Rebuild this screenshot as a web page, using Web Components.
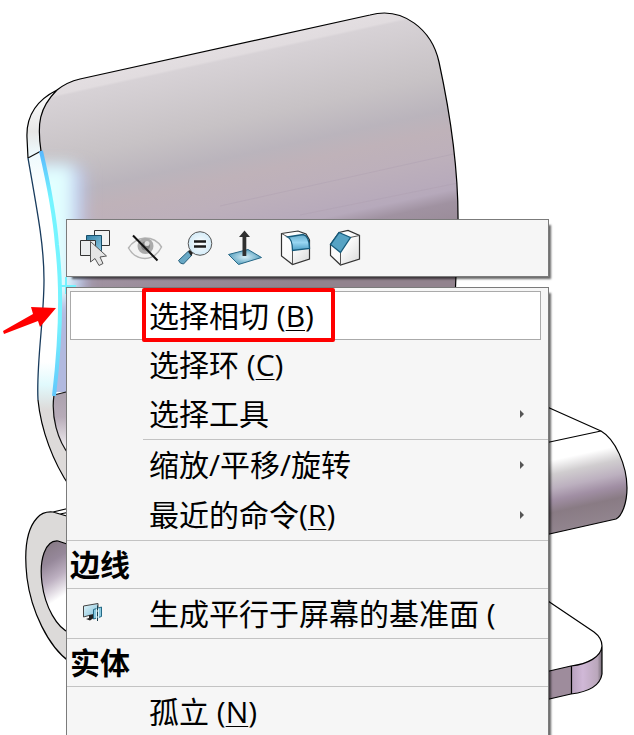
<!DOCTYPE html>
<html lang="zh-CN">
<head>
<meta charset="utf-8">
<meta name="viewport" content="width=device-width, initial-scale=1">
<title>选择相切</title>
<style>
  html, body {
    height: 100%;
    margin: 0;
    overflow: hidden;
    background: #fff;
  }
</style>
</head>
<body>
<cad-workspace>
  <part-view slot="scene"></part-view>
  <icon-toolbar>
    <tool-button icon="select" label="选择其他"></tool-button>
    <tool-button icon="hide" label="隐藏"></tool-button>
    <tool-button icon="zoom" label="放大所选范围"></tool-button>
    <tool-button icon="normal" label="正视于"></tool-button>
    <tool-button icon="fillet" label="圆角"></tool-button>
    <tool-button icon="chamfer" label="倒角"></tool-button>
  </icon-toolbar>
  <context-menu>
    <menu-row active marked>选择相切 (<u>B</u>)</menu-row>
    <menu-row>选择环 (<u>C</u>)</menu-row>
    <menu-row submenu>选择工具</menu-row>
    <menu-line indent></menu-line>
    <menu-row submenu>缩放/平移/旋转</menu-row>
    <menu-row submenu>最近的命令(<u>R</u>)</menu-row>
    <menu-line></menu-line>
    <menu-heading>边线</menu-heading>
    <menu-line></menu-line>
    <menu-row>
      <svg slot="icon" width="22" height="22" viewBox="0 0 22 22" aria-hidden="true">
        <defs>
          <linearGradient id="screen" x1="0" y1="0" x2="1" y2="1">
            <stop offset="0" stop-color="#e4f5fa"/><stop offset="1" stop-color="#7cc0da"/>
          </linearGradient>
        </defs>
        <path d="M1.500 3L16 0.500V10L1.500 14Z" fill="url(#screen)" stroke="#444"/>
        <path d="M7 12V15L4 16L8 17.500L11 15.500V12" fill="#222"/>
        <path d="M11.500 6.500L19.500 4V13.500L11.500 16Z" fill="#8bcbe1" stroke="#246985"/>
        <path d="M15.500 5.500V16" stroke="#d9f1f8" stroke-width="3"/>
        <path d="M15.500 2.500V18" stroke="#193d4b" stroke-dasharray="5 1"/>
      </svg>生成平行于屏幕的基准面 (</menu-row>
    <menu-line></menu-line>
    <menu-heading>实体</menu-heading>
    <menu-line></menu-line>
    <menu-row>孤立 (<u>N</u>)</menu-row>
  </context-menu>
</cad-workspace>

<script>
class CadWorkspace extends HTMLElement {
  constructor () {
    super()
    this.attachShadow({ mode: 'open' })
  }

  connectedCallback () {
    this.shadowRoot.innerHTML = /* html */`
      <style>
        :host {
          display: block;
          position: relative;
          min-height: 100vh;
          font: 30px/40px "Open Sans", "Noto Sans CJK SC", sans-serif;
          color: #000;
        }

        .panels {
          position: relative;
          display: flex;
          flex-direction: column;
          gap: 10px;
          padding: 219px 85px 0 66px;
        }
      </style>

      <slot name="scene"></slot>
      <div class="panels"><slot></slot></div>
    `
  }
}

class PartView extends HTMLElement {
  constructor () {
    super()
    this.attachShadow({ mode: 'open' })
  }

  connectedCallback () {
    this.shadowRoot.innerHTML = /* html */`
      <style>
        :host {
          display: block;
          position: absolute;
          inset: 0;
        }

        svg {
          display: block;
          width: 100%;
        }
      </style>

      <svg viewBox="0 0 634 735" fill="none" stroke-linejoin="round" aria-hidden="true">
        <defs>
          <linearGradient id="face" gradientUnits="userSpaceOnUse" x1="0" y1="97" x2="53" y2="338">
            <stop offset="0" stop-color="#e3dee1"/>
            <stop offset=".04" stop-color="#e1dcdf"/>
            <stop offset=".05" stop-color="#d7d2d6"/>
            <stop offset=".3" stop-color="#c7c2c5"/>
            <stop offset=".44" stop-color="#bab4bc"/>
            <stop offset=".52" stop-color="#bfb2b9"/>
            <stop offset=".62" stop-color="#bdb0bb"/>
            <stop offset=".76" stop-color="#b6a9bb"/>
            <stop offset=".81" stop-color="#a092a1"/>
            <stop offset="1" stop-color="#92838e"/>
          </linearGradient>
          <linearGradient id="side" gradientUnits="userSpaceOnUse" x1="0" y1="90" x2="0" y2="410">
            <stop offset="0" stop-color="#fff"/>
            <stop offset=".13" stop-color="#e7e7e6"/>
            <stop offset=".2" stop-color="#eefafd"/>
            <stop offset=".32" stop-color="#fff"/>
            <stop offset=".85" stop-color="#fff"/>
            <stop offset=".92" stop-color="#e1fafd"/>
            <stop offset="1" stop-color="#dddad9"/>
          </linearGradient>
          <linearGradient id="edge" gradientUnits="userSpaceOnUse" x1="0" y1="150" x2="0" y2="396">
            <stop offset="0" stop-color="#59b7fd"/>
            <stop offset=".2" stop-color="#74f5ff"/>
            <stop offset=".7" stop-color="#75f3ff"/>
            <stop offset="1" stop-color="#61c8fc"/>
          </linearGradient>
          <linearGradient id="bore" x1="0" y1="0" x2=".2" y2="1">
            <stop offset="0" stop-color="#82767e"/>
            <stop offset=".28" stop-color="#96889a"/>
            <stop offset=".48" stop-color="#bdb0c1"/>
            <stop offset=".72" stop-color="#fff"/>
          </linearGradient>
          <linearGradient id="slot" x1="0" y1="0" x2="0" y2="1">
            <stop offset="0" stop-color="#aaa0ad"/>
            <stop offset=".4" stop-color="#b7abb8"/>
            <stop offset="1" stop-color="#fff"/>
          </linearGradient>
          <linearGradient id="pin" gradientUnits="userSpaceOnUse" x1="580" y1="435" x2="600" y2="526">
            <stop offset=".2" stop-color="#fff"/>
            <stop offset=".35" stop-color="#d0cdcf"/>
            <stop offset=".5" stop-color="#bcb0bf"/>
            <stop offset=".62" stop-color="#a18fa4"/>
            <stop offset=".75" stop-color="#897b84"/>
            <stop offset="1" stop-color="#938690"/>
          </linearGradient>
          <linearGradient id="rim" x1="0" y1="0" x2="1" y2="0">
            <stop offset="0" stop-color="#b6a0bc"/>
            <stop offset=".38" stop-color="#d0b8d7"/>
            <stop offset=".85" stop-color="#baa7bb"/>
            <stop offset="1" stop-color="#756c76"/>
          </linearGradient>
          <clipPath id="faceClip">
            <path d="M41 151C37 124 39 108 57 90Q67 82 80 79L370 15C403 6 432 30 439 62Q459 154 458 225L455 300V392H54C62 350 62 250 54 215Z"/>
          </clipPath>
          <filter id="soft" x="-100%" y="-30%" width="300%" height="160%">
            <feGaussianBlur stdDeviation="8"/>
          </filter>
        </defs>

        <!-- upper plate -->
        <path d="M57 90C35 101 26 118 27 138L28 158C39 220 44 248 44 280C44 320 36 365 38 400C41 430 53 462 70 487V452C58 438 51 416 54 395C62 350 62 250 54 215L41 151C37 124 39 108 57 90Z" fill="url(#side)"/>
        <g clip-path="url(#faceClip)">
          <path d="M20 0H470V400H20Z" fill="url(#face)"/>
          <path d="M220 206L458 153M300 215L458 183" stroke="#ac9eaf" stroke-opacity=".4"/>
          <path d="M30 168H84V410H30Z" fill="#bccbfa" fill-opacity=".75" filter="url(#soft)"/>
          <path d="M30 165H73V300H30Z" fill="#e2ffff" filter="url(#soft)"/>
        </g>
        <path d="M54 395L70 391V456C57 440 51 416 54 395Z" fill="url(#slot)"/>
        <path d="M54 395L70 391M54 395C51 416 57 440 70 456M28 158L41 151" stroke="#111" stroke-width="1.200"/>
        <path d="M28 158C39 220 44 248 44 280C44 320 36 365 38 400" stroke="#183b5d" stroke-width="1.300"/>
        <path d="M38 400C41 430 53 462 70 487M28 158L27 138C26 118 35 101 57 90M41 151C37 124 39 108 57 90Q67 82 80 79L370 15C403 6 432 30 439 62Q459 154 458 225L455 300" stroke="#000" stroke-width="1.200"/>
        <path d="M41 151Q54 207 57 245C63 295 60 345 54 396" stroke="url(#edge)" stroke-width="4"/>
        <path d="M60 286H76M66 277V294" stroke="#74f2ff" stroke-width="2"/>

        <!-- lower ring -->
        <path d="M70 517L53 512Q43 511 37 518C26 530 24 552 27 578C31 610 48 647 70 662V633C57 628 45 607 42 583C39 560 45 540 58 541L70 545Z" fill="#dcdad9"/>
        <path d="M70 545L58 541C45 540 39 560 42 583C45 607 57 628 70 633Z" fill="url(#bore)"/>
        <path d="M70 517L53 512Q43 511 37 518C26 530 24 552 27 578C31 610 48 647 70 662M70 545L58 541C45 540 39 560 42 583C45 607 57 628 70 633M53 512L70 508M60 514L70 512" stroke="#000" stroke-width="1.200"/>

        <!-- pin and foot on the right -->
        <path d="M545 443L601 431C615 439 627 465 627 488C627 503 622 516 616 519L545 535Z" fill="url(#pin)"/>
        <path d="M545 406L601 431L545 443M601 431C615 439 627 465 627 488C627 503 622 516 616 519L545 535" stroke="#000" stroke-width="1.200"/>
        <path d="M571 666Q602 660 602 645V674Q600 689 571 694Z" fill="url(#rim)"/>
        <path d="M545 672L571 666V694L545 700Z" fill="#9e8c9c"/>
        <path d="M545 599L594 632Q602 638 602 646C601 657 588 664 571 666L545 672M602 646V674C600 687 587 692 571 694L545 700M571.500 666V694" stroke="#000" stroke-width="1.200"/>

        <path d="M3 331L33 314L31 307L56 308L40 327L38 321L4 334Z" fill="#f00"/>
      </svg>
    `
  }
}

class IconToolbar extends HTMLElement {
  constructor () {
    super()
    this.attachShadow({ mode: 'open' })
  }

  connectedCallback () {
    this.setAttribute('role', 'toolbar')
    this.shadowRoot.innerHTML = /* html */`
      <style>
        :host {
          display: flex;
          padding: 0 3px;
          background: #f6f6f6;
          border: 1px solid #7b7b7b;
          box-shadow: 4px 4px 2px -2px rgba(0, 0, 0, 0.6);
        }
      </style>

      <slot></slot>
    `
  }
}

const icons = {
  select: `
    <path d="M24.500 10.500H39.500V25.500H24.500Z" fill="#f1f2f2" stroke="#333"/>
    <path d="M16.500 15.500H31.500V30.500H16.500Z" fill="url(#blue)" stroke="#164e69"/>
    <path d="M10.500 20.500H25.500V35.500H10.500Z" fill="#ebedee" stroke="#333"/>
    <path d="M20.500 21.500V42L25 38.500L29 45.500L33 43.500L30 37L36.500 36Z" fill="#e5e5e5" stroke="#555"/>`,
  hide: `
    <path d="M8.500 28Q14 19 25 18Q36 18 41.500 27Q36 38 25 38.500Q14 38 8.500 28Z" fill="#f3f3f3" stroke="#b4b4b4" stroke-width="1.500"/>
    <circle cx="25.500" cy="26" r="8" fill="#aaa"/>
    <circle cx="25.500" cy="26" r="4.500" fill="#858585"/>
    <circle cx="27" cy="23.500" r="2.500" fill="#ddd"/>
    <path d="M13 15.500L37.500 40.500" stroke="#111" stroke-width="2"/>`,
  zoom: `
    <path d="M18 31.500L8.500 40.500Q10 44 13.500 44L22 35Z" fill="#68a8c5" stroke="#265e7a"/>
    <path d="M18 31L20 30L23 33L21 36Z" fill="#222"/>
    <circle cx="30" cy="23.500" r="11.800" fill="url(#glass)" stroke="#555"/>
    <path d="M24 21.500H36M24 26.500H36" stroke="#1c1c1c" stroke-width="2.700"/>`,
  normal: `
    <path d="M8.500 34.500L28 29.500L41.500 37.500L18.500 44.500Z" fill="url(#plane)" stroke="#276887"/>
    <path d="M22.500 36V17H19L24.500 10.500L30 17H26.300V36Z" fill="#303030"/>`,
  fillet: `
    <path d="M11.500 13.500L28 11L36 14L39.500 20V39L22.500 44.500L11.500 36Z" fill="url(#solid)" stroke="#333" stroke-width="1.200"/>
    <path d="M11.500 13.500L18 17M22.500 30V44.500" stroke="#555"/>
    <path d="M17.500 17L33 14.500Q39.500 16 39.500 28.500L22.500 30.500Q22.500 19 17.500 17Z" fill="url(#band)" stroke="#155a7b" stroke-width="1.300"/>`,
  chamfer: `
    <path d="M10.500 24.500L19 12.500L28 10.500L39.500 15.500V39L20.500 45L10.500 35.500Z" fill="url(#solid)" stroke="#333" stroke-width="1.200"/>
    <path d="M30 17.500L39.500 15.500M20.500 33V45" stroke="#555"/>
    <path d="M19 12.500L30.500 17.500L20.500 32.500L10.500 24.500Z" fill="#57a3c4" stroke="#155a7b" stroke-width="1.300"/>`
}

class ToolButton extends HTMLElement {
  constructor () {
    super()
    this.attachShadow({ mode: 'open' })
  }

  connectedCallback () {
    this.shadowRoot.innerHTML = /* html */`
      <style>
        :host {
          display: block;
        }

        button {
          display: block;
          padding: 0;
          border: none;
          background: none;
        }

        svg {
          display: block;
        }
      </style>

      <button type="button" aria-label="${this.getAttribute('label')}">
        <svg width="50" height="56" viewBox="0 0 50 56" fill="none" aria-hidden="true">
          <defs>
            <linearGradient id="blue" x1="0" y1="0" x2="1" y2="1">
              <stop stop-color="#2f7fa5"/><stop offset="1" stop-color="#8fc9e2"/>
            </linearGradient>
            <linearGradient id="band" x1="0" y1="0" x2="0" y2="1">
              <stop stop-color="#63a9c9"/><stop offset=".5" stop-color="#98d6f2"/><stop offset="1" stop-color="#4c9ec5"/>
            </linearGradient>
            <linearGradient id="solid" x1="0" y1="0" x2="1" y2="1">
              <stop stop-color="#fff"/><stop offset=".5" stop-color="#fafafa"/><stop offset="1" stop-color="#d8d8d8"/>
            </linearGradient>
            <radialGradient id="plane">
              <stop stop-color="#d7eef7"/><stop offset="1" stop-color="#5ba3c1"/>
            </radialGradient>
            <radialGradient id="glass">
              <stop stop-color="#fff"/><stop offset="1" stop-color="#d3ebf8"/>
            </radialGradient>
          </defs>
          ${icons[this.getAttribute('icon')]}
        </svg>
      </button>
    `
  }
}

class ContextMenu extends HTMLElement {
  constructor () {
    super()
    this.attachShadow({ mode: 'open' })
  }

  connectedCallback () {
    this.setAttribute('role', 'menu')
    this.shadowRoot.innerHTML = /* html */`
      <style>
        :host {
          display: flex;
          flex-direction: column;
          padding: 3px 0;
          background: #f6f6f6;
          border: 1px solid #7b7b7b;
          box-shadow: 4px 4px 2px -2px rgba(0, 0, 0, 0.6);
        }
      </style>

      <slot></slot>
    `
  }
}

class MenuRow extends HTMLElement {
  constructor () {
    super()
    this.attachShadow({ mode: 'open' })
  }

  connectedCallback () {
    this.shadowRoot.innerHTML = /* html */`
      <style>
        :host {
          display: block;
          padding: 0 7px 0 3px;
        }

        button {
          box-sizing: border-box;
          display: flex;
          align-items: center;
          width: 100%;
          height: 49px;
          padding: 0 16px 0 0;
          border: 1px solid transparent;
          background: none;
          color: inherit;
          font: inherit;
          text-align: left;
          white-space: nowrap;
        }

        :host([submenu]) button {
          height: 50px;
        }

        :host([active]) button {
          background: #fff;
          border-color: #aaa;
        }

        .icon {
          display: flex;
          flex: none;
          box-sizing: border-box;
          width: 78px;
          padding-left: 11px;
        }

        .label {
          position: relative;
          padding-right: 21px;
        }

        /* red call-out frame round the label */
        :host([marked]) .label::after {
          content: "";
          position: absolute;
          inset: -8px 0 -6px -7px;
          border: 4px solid #f00;
          border-radius: 2px;
        }

        .arrow {
          display: none;
          margin-left: auto;
          border: 4px solid transparent;
          border-left-color: #555;
          border-right: none;
        }

        :host([submenu]) .arrow {
          display: block;
        }

        ::slotted(u) {
          text-decoration-thickness: 1px;
          text-underline-offset: 3px;
        }
      </style>

      <button type="button" role="menuitem">
        <span class="icon"><slot name="icon"></slot></span>
        <span class="label"><slot></slot></span>
        <span class="arrow"></span>
      </button>
    `
  }
}

class MenuHeading extends HTMLElement {
  constructor () {
    super()
    this.attachShadow({ mode: 'open' })
  }

  connectedCallback () {
    this.shadowRoot.innerHTML = /* html */`
      <style>
        :host {
          display: flex;
          align-items: center;
          height: 47px;
          padding-left: 3px;
          font-weight: bold;
        }
      </style>

      <slot></slot>
    `
  }
}

class MenuLine extends HTMLElement {
  constructor () {
    super()
    this.attachShadow({ mode: 'open' })
  }

  connectedCallback () {
    this.setAttribute('role', 'separator')
    this.shadowRoot.innerHTML = /* html */`
      <style>
        :host {
          display: block;
          height: 1px;
          background: #c3c3c3;
        }

        :host([indent]) {
          margin-left: 76px;
        }
      </style>
    `
  }
}

customElements.define('cad-workspace', CadWorkspace)
customElements.define('part-view', PartView)
customElements.define('icon-toolbar', IconToolbar)
customElements.define('tool-button', ToolButton)
customElements.define('context-menu', ContextMenu)
customElements.define('menu-row', MenuRow)
customElements.define('menu-heading', MenuHeading)
customElements.define('menu-line', MenuLine)
</script>
</body>
</html>
